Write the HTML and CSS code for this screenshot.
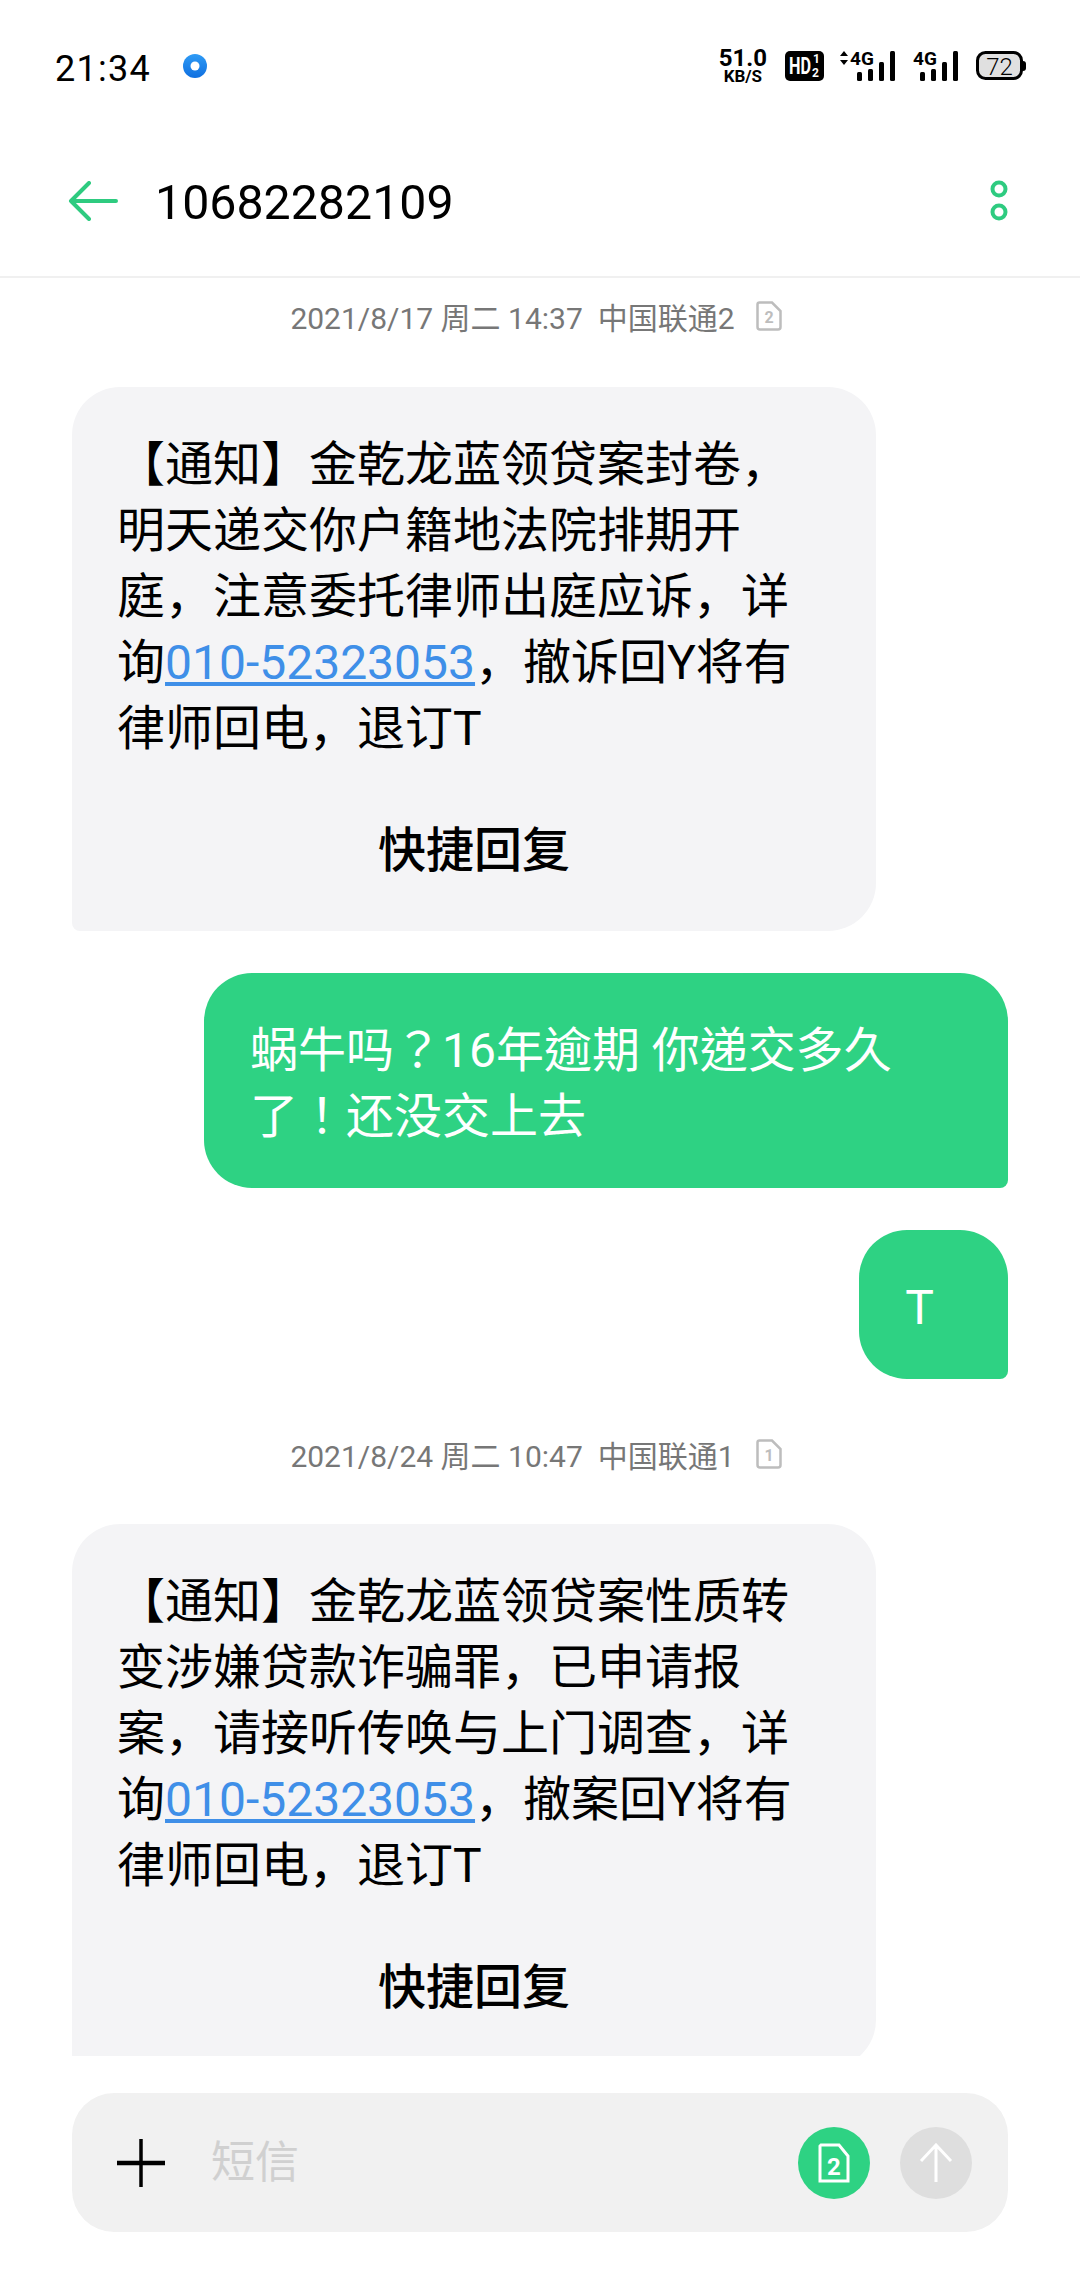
FILE: index.html
```html
<!DOCTYPE html>
<html lang="zh-CN">

<head>
  <meta charset="UTF-8">
  <meta name="viewport" content="width=device-width, initial-scale=1.0">
  <title>10682282109</title>
  <link rel="stylesheet" href="styles.css">
</head>

<body>
  <div class="statusBar">
    <span class="clock">21:34</span>
    <svg class="appDot" width="26" height="26" viewBox="0 0 26 26">
      <defs>
        <linearGradient id="dotBlue" x1="0" y1="0" x2="0" y2="1">
          <stop offset="0" stop-color="#2f9bf5" />
          <stop offset="1" stop-color="#0f6fe0" />
        </linearGradient>
      </defs>
      <circle cx="13" cy="13" r="12" fill="url(#dotBlue)" />
      <circle cx="13" cy="13" r="4.5" fill="#fff" />
    </svg>
    <div class="statusIcons">
      <div class="speed"><span class="speedNum">51.0</span><span class="speedUnit">KB/S</span></div>
      <svg class="hd" width="39" height="30" viewBox="0 0 39 30">
        <rect width="39" height="30" rx="5" fill="#000" />
        <text x="4" y="23" class="hdText" textLength="22" lengthAdjust="spacingAndGlyphs">HD</text>
        <text x="28" y="12" class="hdSmall">1</text>
        <text x="27" y="26" class="hdSmall">2</text>
      </svg>
      <svg class="signal signalFirst" width="56" height="38" viewBox="0 -6 56 38">
        <path d="M5 1 L9 6 H1 Z M5 15 L9 10 H1 Z" fill="#000" />
        <text x="11" y="15" class="netText">4G</text>
        <rect x="18" y="22" width="5" height="9" rx="1.5" />
        <rect x="29" y="19" width="5" height="12" rx="1.5" />
        <rect x="40" y="12" width="5" height="19" rx="1.5" />
        <rect x="51" y="1" width="5" height="30" rx="1.5" />
      </svg>
      <svg class="signal" width="45" height="38" viewBox="0 -6 45 38">
        <text x="0" y="15" class="netText">4G</text>
        <rect x="7" y="22" width="5" height="9" rx="1.5" />
        <rect x="18" y="19" width="5" height="12" rx="1.5" />
        <rect x="29" y="12" width="5" height="19" rx="1.5" />
        <rect x="40" y="1" width="5" height="30" rx="1.5" />
      </svg>
      <svg class="battery" width="50" height="30" viewBox="0 0 50 30">
        <rect x="1.5" y="1.5" width="44" height="26" rx="8" fill="#e0e0e0" stroke="#000" stroke-width="3" />
        <path d="M47 10 Q50 10 50 13 V17 Q50 20 47 20 Z" fill="#000" />
        <text x="23.5" y="24" class="batteryText" text-anchor="middle">72</text>
      </svg>
    </div>
  </div>

  <div class="topBar">
    <svg class="back" width="50" height="40" viewBox="0 0 50 40">
      <path d="M21 2 L3 20 L21 38 M3 20 H48" fill="none" stroke="#2ecb80" stroke-width="4" stroke-linecap="round" stroke-linejoin="round" />
    </svg>
    <span class="number">10682282109</span>
    <svg class="more" width="20" height="44" viewBox="0 0 20 44">
      <circle cx="10" cy="10" r="6.5" fill="none" stroke="#2ecb80" stroke-width="4" />
      <circle cx="10" cy="33" r="6.5" fill="none" stroke="#2ecb80" stroke-width="4" />
    </svg>
  </div>

  <div class="thread">
    <div class="stamp">
      <span>2021/8/17 周二 14:37</span>
      <span>中国联通2</span>
      <svg class="simTag" width="26" height="30" viewBox="0 0 26 30">
        <path d="M3.5 1.5 H16 L24.5 10 V26 Q24.5 28.5 22 28.5 H4 Q1.5 28.5 1.5 26 V3.5 Q1.5 1.5 3.5 1.5 Z" fill="none" stroke="#bdbdbd" stroke-width="2.5" />
        <text x="13" y="22" class="simText" text-anchor="middle">2</text>
      </svg>
    </div>

    <div class="bubble inbox">
      <p>【通知】金乾龙蓝领贷案封卷，<br>明天递交你户籍地法院排期开<br>庭，注意委托律师出庭应诉，详<br>询<a class="phone">010-52323053</a>，撤诉回Y将有<br>律师回电，退订T</p>
      <div class="quickReply">快捷回复</div>
    </div>

    <div class="bubble sent" lang="zh-TW">
      <p>蜗牛吗？16年逾期 你递交多久了！还没交上去</p>
    </div>

    <div class="bubble sent">
      <p>T</p>
    </div>

    <div class="stamp stampLater">
      <span>2021/8/24 周二 10:47</span>
      <span>中国联通1</span>
      <svg class="simTag" width="26" height="30" viewBox="0 0 26 30">
        <path d="M3.5 1.5 H16 L24.5 10 V26 Q24.5 28.5 22 28.5 H4 Q1.5 28.5 1.5 26 V3.5 Q1.5 1.5 3.5 1.5 Z" fill="none" stroke="#bdbdbd" stroke-width="2.5" />
        <text x="13" y="22" class="simText" text-anchor="middle">1</text>
      </svg>
    </div>

    <div class="bubble inbox">
      <p>【通知】金乾龙蓝领贷案性质转<br>变涉嫌贷款诈骗罪，已申请报<br>案，请接听传唤与上门调查，详<br>询<a class="phone">010-52323053</a>，撤案回Y将有<br>律师回电，退订T</p>
      <div class="quickReply">快捷回复</div>
    </div>
  </div>

  <div class="footer">
    <div class="composer">
      <svg class="plus" width="48" height="48" viewBox="0 0 48 48">
        <path d="M24 0 V48" stroke="#000" stroke-width="3.5" />
        <path d="M0 24 H48" stroke="#000" stroke-width="4.5" />
      </svg>
      <span class="hint">短信</span>
      <div class="roundBtn simBtn">
        <svg width="32" height="40" viewBox="0 0 32 40">
          <path d="M3 2 H21 L30 13 V38 H2 V3 Z" fill="none" stroke="#fff" stroke-width="3" />
          <text x="16" y="32" class="simBtnText" text-anchor="middle">2</text>
        </svg>
      </div>
      <div class="roundBtn sendBtn">
        <svg width="34" height="40" viewBox="0 0 34 40">
          <path d="M17 39 V2 M2 18 L17 2 L32 18" fill="none" stroke="#fff" stroke-width="3" />
        </svg>
      </div>
    </div>
  </div>
</body>

</html>
```

FILE: styles.css
```css
* {
  padding: 0;
  margin: 0;
  box-sizing: border-box;
}

body {
  width: 1080px;
  height: 2280px;
  overflow: hidden;
  display: flex;
  flex-direction: column;
  background: #fff;
  color: #000;
  font-family: Roboto, "Noto Sans CJK SC", sans-serif;
}

/* status bar */
.statusBar {
  height: 126px;
  padding: 46px 54px 0 55px;
  display: flex;
  align-items: flex-start;
}

.clock {
  margin-top: 3px;
  font-size: 36px;
  line-height: 40px;
  letter-spacing: 1.3px;
}

.appDot {
  margin-left: 31px;
  margin-top: 7px;
}

.statusIcons {
  margin-left: auto;
  margin-top: 2px;
  display: flex;
  align-items: center;
  gap: 18px;
}

.speed {
  display: flex;
  flex-direction: column;
  align-items: center;
  font-weight: 700;
}

.speedNum {
  font-size: 24px;
  line-height: 20px;
}

.speedUnit {
  font-size: 17px;
  line-height: 16px;
}

.hd {
  margin-right: -3px;
}

.hdText {
  font-size: 23px;
  font-weight: 700;
  fill: #fff;
}

.hdSmall {
  font-size: 12px;
  font-weight: 700;
  fill: #fff;
}

.signal {
  margin-top: -6px;
}

.netText {
  font-size: 19px;
  font-weight: 700;
}

.batteryText {
  font-size: 24px;
  font-weight: 300;
}

/* top bar */
.topBar {
  height: 152px;
  padding: 0 71px 0 68px;
  display: flex;
  align-items: center;
  border-bottom: 2px solid #f0f0f0;
}

.number {
  margin-left: 37px;
  margin-top: 2px;
  font-size: 48.3px;
}

.more {
  margin-left: auto;
}

/* messages */
.thread {
  flex: 1;
  min-height: 0;
  overflow: hidden;
  padding: 18px 72px 0;
  display: flex;
  flex-direction: column;
}

.stamp {
  height: 40px;
  margin-right: 8px;
  margin-bottom: 51px;
  display: flex;
  justify-content: center;
  align-items: center;
  gap: 15px;
  color: #777;
  font-size: 30px;
  flex-shrink: 0;
}

.stampLater {
  margin-top: 55px;
  margin-bottom: 50px;
}

.simTag {
  margin-left: 6px;
}

.simText {
  font-size: 16px;
  font-weight: 700;
  fill: #bdbdbd;
}

.bubble {
  flex-shrink: 0;
  font-size: 48px;
  line-height: 66px;
}

.inbox {
  width: 804px;
  padding: 45px 45px 47px;
  background: #f4f4f6;
  border-radius: 48px 48px 48px 8px;
}

/* TC font: full width ? and ! sit in the middle of the cell */
.sent {
  align-self: flex-end;
  max-width: 804px;
  padding: 45px 74px 38px 46px;
  margin-top: 42px;
  background: #2ed283;
  color: #fff;
  font-family: Roboto, "Noto Sans CJK TC", sans-serif;
  border-radius: 48px 48px 8px 48px;
}

.phone {
  color: #3f8fe8;
  text-decoration: underline;
}

.quickReply {
  margin-top: 56px;
  text-align: center;
  font-weight: 500;
}

/* composer */
.footer {
  padding: 37px 72px 48px;
}

.composer {
  height: 139px;
  padding: 0 36px 0 45px;
  display: flex;
  align-items: center;
  background: #f1f1f1;
  border-radius: 42px;
}

.plus {
  flex-shrink: 0;
}

.hint {
  margin-left: 46px;
  margin-bottom: 8px;
  font-size: 44px;
  color: #d0d0d0;
}

.roundBtn {
  width: 72px;
  height: 72px;
  border-radius: 50%;
  display: flex;
  justify-content: center;
  align-items: center;
}

.simBtn {
  margin-left: auto;
  background: #2ed283;
}

.simBtnText {
  font-size: 24px;
  font-weight: 700;
  fill: #fff;
}

.sendBtn {
  margin-left: 30px;
  background: #dedede;
}
```
